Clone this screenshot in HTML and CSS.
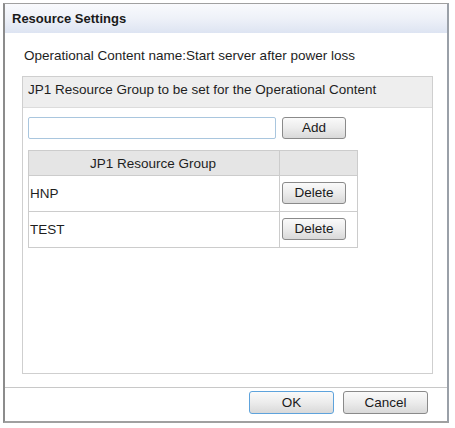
FILE: index.html
```html
<!DOCTYPE html>
<html>
<head>
<meta charset="utf-8">
<link rel="stylesheet" href="styles.css">
</head>
<body>
<div class="dialog">
  <div class="titlebar">Resource Settings</div>
  <div class="content">
    <div class="name">Operational Content name:Start server after power loss</div>
    <div class="group">
      <div class="group-head">JP1 Resource Group to be set for the Operational Content</div>
      <div class="group-body">
        <div class="add-row">
          <input class="text" type="text">
          <button class="btn">Add</button>
        </div>
        <table class="grid">
          <thead>
            <tr><th class="c1">JP1 Resource Group</th><th class="c2"></th></tr>
          </thead>
          <tbody>
            <tr><td class="c1">HNP</td><td class="c2"><button class="btn">Delete</button></td></tr>
            <tr><td class="c1">TEST</td><td class="c2"><button class="btn">Delete</button></td></tr>
          </tbody>
        </table>
      </div>
    </div>
  </div>
  <div class="footer">
    <button class="btn wide ok">OK</button>
    <button class="btn wide">Cancel</button>
  </div>
</div>
</body>
</html>
```

FILE: styles.css
```css
html, body {
  margin: 0;
  padding: 0;
  background: #ffffff;
}
body {
  padding: 3px 0 0 3px;
  font-family: "Liberation Sans", Arial, sans-serif;
  font-size: 13.5px;
  color: #1e1e1e;
}
.dialog {
  box-sizing: border-box;
  width: 446px;
  height: 420px;
  border: 1px solid #a0a0a0;
  border-left: 2px solid #8c8c8c;
  border-right: 2px solid #9aa0a8;
  border-bottom: 2px solid #a0a0a0;
  background: #ffffff;
  display: flex;
  flex-direction: column;
}
.titlebar {
  height: 29px;
  flex: none;
  box-sizing: border-box;
  padding-left: 7px;
  line-height: 30px;
  font-weight: bold;
  font-size: 13px;
  color: #1a1a1a;
  background: linear-gradient(to bottom, #f9fafd 0%, #eef1f8 50%, #dde4f2 100%);
}
.content {
  flex: 1;
  padding: 15px 14px 13px 17px;
  display: flex;
  flex-direction: column;
  border-bottom: 1px solid #c8c8c8;
}
.name {
  line-height: 16px;
  height: 16px;
  padding-left: 2px;
  margin-bottom: 12px;
}
.group {
  flex: 1;
  border: 1px solid #cfcfcf;
  display: flex;
  flex-direction: column;
}
.group-head {
  height: 30px;
  line-height: 26px;
  padding-left: 5px;
  background: #eeeeee;
  border-bottom: 1px solid #dcdcdc;
}
.group-body {
  padding: 9px 5px 0 5px;
}
.add-row {
  display: flex;
  align-items: center;
  gap: 6px;
}
.text {
  box-sizing: border-box;
  width: 248px;
  height: 22px;
  margin: 0;
  border: 1px solid #a9c6de;
  border-radius: 2px;
  background: #ffffff;
  padding: 0 3px;
  font: inherit;
}
.btn {
  box-sizing: border-box;
  width: 64px;
  height: 22px;
  margin: 0;
  padding: 0;
  border: 1px solid #8a8a8a;
  border-radius: 3px;
  background: linear-gradient(to bottom, #fafafa 0%, #ececec 50%, #d9d9d9 100%);
  font-family: "Liberation Sans", Arial, sans-serif;
  font-size: 13.5px;
  color: #1a1a1a;
  line-height: 20px;
}
.grid {
  margin-top: 11px;
  border-collapse: collapse;
  width: 330px;
}
.grid th, .grid td {
  border: 1px solid #cccccc;
  padding: 0;
}
.grid th {
  height: 24px;
  background: #e5e5e5;
  font-weight: normal;
  text-align: center;
}
.grid th.c1 {
  padding-right: 2px;
}
.grid .c1 {
  width: 248px;
}
.grid td.c1 {
  padding-left: 1px;
}
.grid td {
  height: 35px;
}
.grid td.c2 {
  padding-left: 2px;
}
.grid td.c2 .btn {
  display: block;
  margin-top: -1px;
}
.footer {
  height: 33px;
  flex: none;
  display: flex;
  justify-content: flex-end;
  align-items: flex-start;
  gap: 9px;
  padding: 3px 19px 0 0;
  box-sizing: border-box;
}
.btn.wide {
  width: 85px;
  height: 23px;
}
.btn.ok {
  border-color: #5ea3dc;
}
```
